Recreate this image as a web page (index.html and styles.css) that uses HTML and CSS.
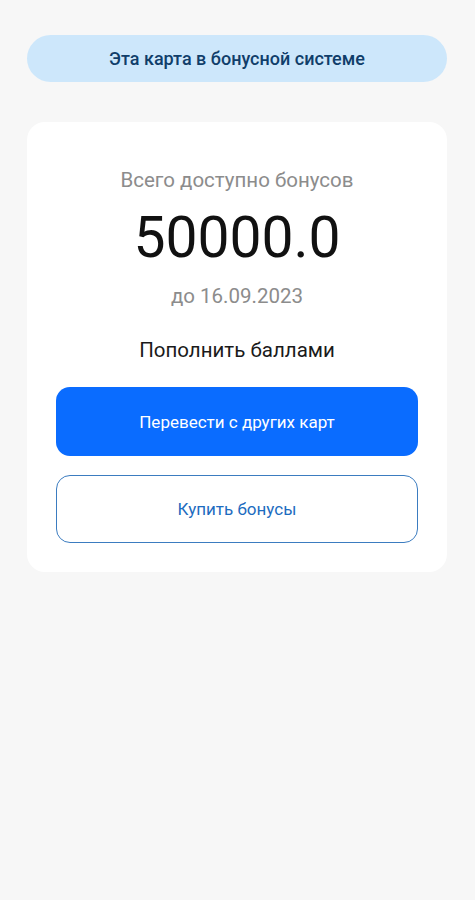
FILE: index.html
```html
<!DOCTYPE html>
<html lang="ru">
<head>
  <meta charset="UTF-8" />
  <meta name="viewport" content="width=device-width, initial-scale=1.0" />
  <title>Бонусы</title>
  <link rel="stylesheet" href="styles.css">
</head>
<body>
  <div class="page">
    <div class="banner">Эта карта в бонусной системе</div>
    <div class="card">
      <div class="label">Всего доступно бонусов</div>
      <div class="amount">50000.0</div>
      <div class="until">до 16.09.2023</div>
      <div class="topup">Пополнить баллами</div>
      <button class="btn btn-primary">Перевести с других карт</button>
      <button class="btn btn-outline">Купить бонусы</button>
    </div>
  </div>
</body>
</html>
```

FILE: styles.css
```css
body {
  margin: 0;
  font-family: Roboto, "Noto Sans", sans-serif;
  background: #f7f7f7;
  min-height: 100vh;
}
.page {
  padding: 35px 28px 0 27px;
  display: flex;
  flex-direction: column;
  gap: 40px;
}
.banner {
  height: 47px;
  border-radius: 24px;
  background: #cde7fb;
  color: #103e6a;
  font-size: 18px;
  font-weight: 500;
  display: flex;
  align-items: center;
  justify-content: center;
}
.card {
  background: #fff;
  border-radius: 18px;
  padding: 45px 29px 29px;
  display: flex;
  flex-direction: column;
  align-items: center;
}
.label {
  color: #8c8c8c;
  font-size: 20.5px;
  line-height: 26px;
}
.amount {
  color: #111;
  font-size: 57px;
  line-height: 64px;
  margin-top: 13px;
}
.until {
  color: #8c8c8c;
  font-size: 20.5px;
  line-height: 26px;
  margin-top: 13px;
}
.topup {
  color: #1a1a1a;
  font-size: 20.5px;
  line-height: 26px;
  margin-top: 28px;
}
.btn {
  width: 100%;
  height: 68px;
  border-radius: 14px;
  font-family: inherit;
  font-size: 17px;
  cursor: pointer;
}
.btn-primary {
  height: 69px;
  margin-top: 24px;
  background: #0a6cff;
  color: #fff;
  border: none;
}
.btn-outline {
  margin-top: 19px;
  background: #fff;
  color: #1d6cc0;
  border: 1px solid #3b7cc0;
}
```
